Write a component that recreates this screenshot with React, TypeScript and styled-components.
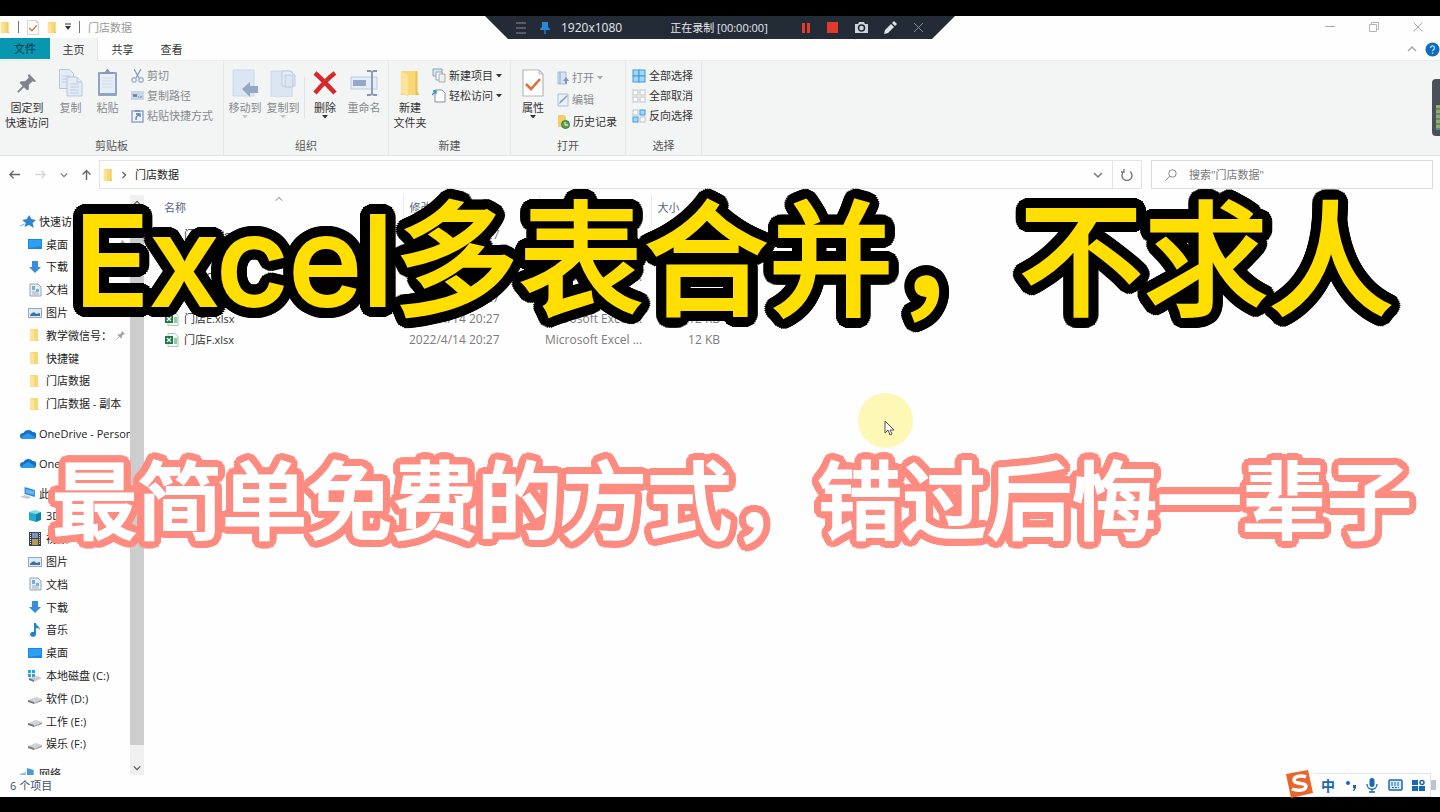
import React from "react";
import styled, { createGlobalStyle, css } from "styled-components";

const GlobalStyle = createGlobalStyle`
  * { box-sizing: border-box; }
  body {
    margin: 0;
    background: #000;
    font-family: "Open Sans", "Noto Sans CJK SC", sans-serif;
    font-size: 11px;
    line-height: 15px;
    color: #333;
  }
  button, input {
    font: inherit;
    color: inherit;
    border: 0;
    padding: 0;
    margin: 0;
    background: none;
  }
  ul { list-style: none; margin: 0; padding: 0; }
`;

const Screen = styled.div`
  position: relative;
  min-height: 100vh;
  padding: 16px 0 15px;
  display: flex;
  flex-direction: column;
  overflow: hidden;
`;

const Window = styled.main`
  position: relative;
  flex: 1;
  display: flex;
  flex-direction: column;
  background: #fefefe;
`;

/* ---------- title bar ---------- */

const TitleBar = styled.header`
  display: flex;
  align-items: center;
  height: 22px;
`;

const QuickTools = styled.div`
  display: flex;
  align-items: center;
  gap: 8px;
`;

const Rule = styled.span`
  width: 1px;
  height: 12px;
  background: #777;
`;

const WindowTitle = styled.h1`
  margin: 0 0 0 8px;
  font-size: 11px;
  font-weight: 400;
  color: #9a9a9a;
`;

const WindowControls = styled.div`
  display: flex;
  gap: 34px;
  margin-left: auto;
  padding-right: 17px;
`;

const IconButton = styled.button`
  display: inline-flex;
  align-items: center;
  justify-content: center;
`;

/* ---------- recorder bar ---------- */

const Recorder = styled.div`
  position: absolute;
  top: 0;
  left: calc(50% - 235px);
  width: 470px;
  height: 23px;
  padding: 0 31px 0 30px;
  display: flex;
  align-items: center;
  background: #232b36;
  color: #e6e9ec;
  clip-path: polygon(0 0, 100% 0, 447px 100%, 23px 100%);
`;

const RecorderLead = styled.div`
  display: flex;
  align-items: center;
  gap: 12px;
`;

const RecorderText = styled.span<{ $size: number; $gap: number }>`
  font-size: ${(p) => p.$size}px;
  margin-left: ${(p) => p.$gap}px;
  white-space: nowrap;
`;

const RecorderTools = styled.div`
  display: flex;
  align-items: center;
  justify-content: space-between;
  width: 123px;
  margin-left: auto;
`;

/* ---------- tabs ---------- */

const Tabs = styled.nav`
  display: flex;
  height: 23px;
  align-items: stretch;
  border-bottom: 1px solid #eceeee;
`;

const Tab = styled.button<{ $kind?: "file" | "active" }>`
  width: 49px;
  ${(p) =>
    p.$kind === "file" &&
    css`
      width: 50px;
      height: 21px;
      background: #0797b0;
      color: #12323a;
    `}
  ${(p) =>
    p.$kind === "active" &&
    css`
      width: 48px;
      margin-bottom: -1px;
      background: #f3f5f5;
      border-right: 1px solid #e4e6e6;
    `}
`;

const TabTools = styled.div`
  display: flex;
  align-items: center;
  gap: 8px;
  margin-left: auto;
`;

/* ---------- ribbon ---------- */

const Ribbon = styled.section`
  display: flex;
  height: 95px;
  background: #f3f5f5;
  border-bottom: 1px solid #e3e5e5;
`;

const Group = styled.div<{ $width: number }>`
  display: flex;
  flex-direction: column;
  justify-content: space-between;
  width: ${(p) => p.$width}px;
  padding-top: 5px;
  border-right: 1px solid #e6e8e8;
`;

const GroupItems = styled.div<{ $inset?: number }>`
  display: flex;
  padding-left: ${(p) => p.$inset ?? 0}px;
`;

const GroupLabel = styled.span`
  text-align: center;
  line-height: 18px;
  color: #555;
`;

const BigButton = styled.button<{ $width: number; $muted?: boolean }>`
  display: flex;
  flex-direction: column;
  align-items: center;
  width: ${(p) => p.$width}px;
  white-space: nowrap;
  color: ${(p) => (p.$muted ? "#85898d" : "#333")};
  svg { flex: none; }
`;

const IconSlot = styled.span`
  display: flex;
  align-items: center;
  height: 34px;
`;

const SmallList = styled.div<{ $roomy?: boolean; $inset?: number }>`
  display: flex;
  flex-direction: column;
  gap: ${(p) => (p.$roomy ? 7 : 5)}px;
  padding-top: ${(p) => (p.$roomy ? 4 : 2)}px;
  margin-left: ${(p) => p.$inset ?? 0}px;
`;

const SmallButton = styled.button<{ $muted?: boolean }>`
  display: flex;
  align-items: center;
  gap: 3px;
  height: 15px;
  white-space: nowrap;
  color: ${(p) => (p.$muted ? "#85898d" : "#333")};
`;

const Divider = styled.span`
  width: 1px;
  height: 41px;
  margin: 11px 1px 0 2px;
  background: #dfe1e2;
`;

/* ---------- address row ---------- */

const AddressRow = styled.div`
  display: flex;
  align-items: center;
  height: 37px;
  padding: 0 7px 0 8px;
`;

const NavButtons = styled.div`
  display: flex;
  align-items: center;
  justify-content: space-between;
  width: 84px;
  margin-right: 7px;
`;

const AddressBox = styled.div`
  flex: 1;
  display: flex;
  align-items: center;
  gap: 7px;
  height: 29px;
  padding: 0 9px 0 3px;
  border: 1px solid #e4e4e4;
  color: #222;
  & > :last-child { margin-left: auto; }
`;

const RefreshBox = styled.button`
  width: 29px;
  height: 29px;
  display: flex;
  align-items: center;
  justify-content: center;
  border: 1px solid #e4e4e4;
  border-left: 0;
`;

const SearchBox = styled.label`
  display: flex;
  align-items: center;
  gap: 12px;
  width: 282px;
  height: 29px;
  margin-left: 9px;
  padding-left: 13px;
  border: 1px solid #dcdcdc;
  input { flex: 1; min-width: 0; outline: 0; }
  input::placeholder { color: #777; opacity: 1; }
`;

/* ---------- body ---------- */

const Body = styled.div`
  flex: 1;
  display: flex;
  min-height: 0;
  padding-top: 2px;
`;

const Sidebar = styled.aside`
  display: flex;
  width: 144px;
  overflow: hidden;
`;

const Tree = styled.ul`
  flex: 1;
  min-width: 0;
  display: flex;
  flex-direction: column;
  padding-top: 15px;
  margin-bottom: -10px;
`;

const TreeItem = styled.li<{ $root?: boolean; $gap?: boolean }>`
  flex: 1 0 0;
  min-height: 22px;
  display: flex;
  align-items: center;
  gap: ${(p) => (p.$root ? 3 : 4)}px;
  margin-top: ${(p) => (p.$gap ? 7 : 0)}px;
  padding-left: ${(p) => (p.$root ? 20 : 28)}px;
  white-space: nowrap;
  overflow: hidden;
  color: #222;
  svg { flex: none; }
`;

const TreePin = styled.span`
  display: flex;
  margin-left: auto;
  padding-right: 4px;
`;

const ScrollTrack = styled.div`
  width: 14px;
  display: flex;
  flex-direction: column;
  align-items: center;
  background: #f0f0f0;
`;

const ScrollArrow = styled.button`
  height: 15px;
  display: flex;
  align-items: center;
`;

const ScrollThumb = styled.div`
  flex: 1;
  align-self: stretch;
  margin-bottom: 15px;
  background: #cdcdcd;
`;

const Files = styled.section`
  flex: 1;
  padding-left: 14px;
`;

const FileTable = styled.table`
  table-layout: fixed;
  width: 568px;
  border-collapse: collapse;
  line-height: 20px;
`;

const HeadCell = styled.th<{ $width: number }>`
  position: relative;
  width: ${(p) => p.$width}px;
  height: 29px;
  padding: 0 0 3px 6px;
  border-right: 1px solid #ebebeb;
  font-weight: 400;
  text-align: left;
  color: #56657c;
`;

const SortMark = styled.span`
  position: absolute;
  top: 0;
  left: 48%;
  display: flex;
`;

const Cell = styled.td<{ $right?: boolean; $name?: boolean }>`
  height: 21px;
  padding: 0 6px;
  font-size: ${(p) => (p.$name ? 11 : 12)}px;
  text-align: ${(p) => (p.$right ? "right" : "left")};
  color: ${(p) => (p.$name ? "#333" : "#7b7b7b")};
  white-space: nowrap;
`;

const FileName = styled.span`
  display: flex;
  align-items: center;
  gap: 5px;
`;

const StatusBar = styled.footer`
  height: 22px;
  padding: 3px 10px;
  color: #3c4f66;
`;

/* ---------- things floating over the desktop ---------- */

const Gadget = styled.div`
  position: absolute;
  top: 63px;
  right: 0;
  width: 8px;
  height: 57px;
  padding: 26px 0 6px 4px;
  border-radius: 4px 0 0 4px;
  background: #4b4f5a;
  &::after {
    content: "";
    display: block;
    height: 100%;
    background: repeating-linear-gradient(#9aa86a 0 3px, #5d8a72 3px 5px);
  }
`;

const ImeBar = styled.div`
  position: absolute;
  right: 4px;
  bottom: 0;
  height: 27px;
  display: flex;
  align-items: center;
  color: #1868b8;
`;

const ImeKeys = styled.div`
  display: flex;
  align-items: center;
  justify-content: space-between;
  width: 117px;
  height: 24px;
  padding: 0 5px 0 7px;
  margin-top: 3px;
  border: 1px solid #dfe5f0;
  border-left: 0;
  font-size: 14px;
  font-weight: 700;
`;

const ImeGrip = styled.span`
  width: 5px;
  height: 10px;
  margin-top: 3px;
  background: #b9c4d4;
`;

const PointerHalo = styled.div`
  position: absolute;
  top: 393px;
  left: 858px;
  width: 55px;
  height: 55px;
  border-radius: 50%;
  background: #fdf8b5;
  padding: 27px 0 0 26px;
`;

/* A round-cornered outline: copies of the text set in rings around it. */
const outline = (radius: number, color: string) =>
  [radius, radius / 2]
    .flatMap((r) =>
      Array.from({ length: 32 }, (_, i) => {
        const a = (i * Math.PI) / 16;
        return `${(Math.cos(a) * r).toFixed(2)}px ${(Math.sin(a) * r).toFixed(2)}px 0 ${color}`;
      }),
    )
    .join(", ");

const Caption = styled.p<{ $main?: boolean }>`
  position: absolute;
  margin: 0;
  white-space: nowrap;
  font-family: Inter, "Noto Sans CJK SC", sans-serif;
  font-weight: 500;
  ${(p) =>
    p.$main
      ? css`
          top: 186px;
          left: 74px;
          font-size: 125px;
          line-height: 150px;
          color: #ffde00;
          -webkit-text-stroke: 2px #ffde00;
          text-shadow: ${outline(11, "#000")};
        `
      : css`
          top: 453px;
          left: 52px;
          font-size: 85px;
          line-height: 100px;
          color: #fff;
          -webkit-text-stroke: 2px #fff;
          text-shadow: ${outline(8, "#fd8b80")};
        `}
`;

/* ---------- icons ---------- */

const Folder = ({ w = 12, h = 14 }: { w?: number; h?: number }) => (
  <svg width={w} height={h} viewBox="0 0 12 14" preserveAspectRatio="none" aria-hidden>
    <path d="M1 1h9v10l1 2H1z" fill="#f8d775" />
    <path d="M1 1l4 2v11l-4-2z" fill="#fbe39a" />
    <path d="M10 1v10l1 2H9V1z" fill="#edc04f" />
  </svg>
);

const CheckDoc = ({ w, h }: { w: number; h: number }) => (
  <svg width={w} height={h} viewBox="0 0 22 28" aria-hidden>
    <path d="M1 1h16l4 4v22H1z" fill="#fff" stroke="#b5b8bb" strokeWidth="1.2" />
    <path d="M17 1v4h4" fill="none" stroke="#b5b8bb" />
    <path d="M4 15l5 5 9-10" fill="none" stroke="#dd7137" strokeWidth="2.6" />
  </svg>
);

const Caret = ({ color = "#333" }: { color?: string }) => (
  <svg width="6" height="4" viewBox="0 0 6 4" aria-hidden>
    <path d="M0 0h6L3 3.500z" fill={color} />
  </svg>
);

const QuickCaret = () => (
  <svg width="6" height="8" viewBox="0 0 6 8" aria-hidden>
    <path d="M0 1h6" stroke="#333" />
    <path d="M0 3h6L3 7z" fill="#333" />
  </svg>
);

const Chevron = ({ dir = "down", size = 9, color = "#555" }: { dir?: "down" | "up" | "right"; size?: number; color?: string }) => (
  <svg width={size} height={size} viewBox="0 0 10 10" aria-hidden>
    <path
      d={dir === "down" ? "M1 3l4 4 4-4" : dir === "up" ? "M1 7l4-4 4 4" : "M3 1l4 4-4 4"}
      fill="none"
      stroke={color}
      strokeWidth="1.500"
    />
  </svg>
);

const NavArrow = ({ dir, color = "#666" }: { dir: "left" | "right" | "up"; color?: string }) => (
  <svg width={dir === "up" ? 11 : 13} height="13" viewBox="0 0 14 14" aria-hidden>
    <path
      d={
        dir === "left"
          ? "M13 7H2M6 3L2 7l4 4"
          : dir === "right"
            ? "M1 7h11M8 3l4 4-4 4"
            : "M7 14V2M2 7l5-5 5 5"
      }
      fill="none"
      stroke={color}
      strokeWidth={dir === "up" ? 1.8 : 1.4}
    />
  </svg>
);

const Pushpin = ({ size, color }: { size: number; color: string }) => (
  <svg width={size} height={size} viewBox="0 0 24 24" aria-hidden>
    <path d="M14 2l8 8-2 1-2-1-4 4v5l-2 1-8-8 1-2h5l4-4-1-2z" fill={color} />
    <path d="M9 15l-7 7" stroke={color} strokeWidth="2" />
  </svg>
);

const CopyIcon = () => (
  <svg width="24" height="28" viewBox="0 0 24 28" aria-hidden>
    <g fill="#e3ebf5" stroke="#b5c6dc">
      <path d="M.5.5h10l4 4v15H.5z" />
      <path d="M8 8h10l5 5v14H8z" />
      <path d="M18 8v5h5" />
    </g>
    <path d="M3 7h8M3 10h5M3 13h5M11 15h9M11 18h9M11 21h9M11 24h9" stroke="#bccde2" />
  </svg>
);

const PasteIcon = () => (
  <svg width="21" height="28" viewBox="0 0 21 28" aria-hidden>
    <rect x="1" y="3" width="19" height="24" rx="1" fill="#8fa5c6" />
    <rect x="3" y="5" width="15" height="19" fill="#e6edf6" />
    <path d="M5 5V3h3l2-3h1l2 3h3v2z" fill="#8798af" />
    <path d="M5 9h11M5 12h11M5 15h11M5 18h11" stroke="#d1dceb" />
  </svg>
);

const CutIcon = () => (
  <svg width="13" height="14" viewBox="0 0 13 14" aria-hidden>
    <path d="M3 0l5 9M10 0L5 9" stroke="#8d9bb0" strokeWidth="1.300" />
    <circle cx="3" cy="11" r="2.200" fill="none" stroke="#9fb4d2" strokeWidth="1.400" />
    <circle cx="10" cy="11" r="2.200" fill="none" stroke="#9fb4d2" strokeWidth="1.400" />
  </svg>
);

const PathIcon = () => (
  <svg width="13" height="10" viewBox="0 0 13 10" aria-hidden>
    <rect width="13" height="9" fill="#c8d6e9" />
    <path d="M2 3l1 3 1-3 1 3 1-3M7 6h1M9 6h2" fill="none" stroke="#6a7d99" />
  </svg>
);

const ShortcutIcon = () => (
  <svg width="13" height="14" viewBox="0 0 13 14" aria-hidden>
    <rect x="1" y="2" width="11" height="11" fill="#f0f5fb" stroke="#8ca6cb" strokeWidth="1.500" />
    <path d="M4 1h5v2H4z" fill="#8798af" />
    <path d="M5 11c0-3 0-4 3-5M5 5h4v3" fill="none" stroke="#4e75b0" strokeWidth="1.300" />
  </svg>
);

const MoveToIcon = () => (
  <svg width="26" height="28" viewBox="0 0 26 28" aria-hidden>
    <path d="M1 1h21v26H1z" fill="#dce6f3" stroke="#cad8ea" />
    <path d="M10 20l8-7v4h8v7h-8v4z" fill="#94a7c4" />
  </svg>
);

const CopyToIcon = () => (
  <svg width="26" height="28" viewBox="0 0 26 28" aria-hidden>
    <path d="M1 2h21v26H1z" fill="#dce6f3" stroke="#cad8ea" />
    <path d="M12 2h8l5 4v11H12z" fill="#e5edf7" stroke="#bccbe0" />
    <path d="M15 6h8v12h-8z" fill="#dae4f2" stroke="#bccbe0" />
  </svg>
);

const DeleteIcon = () => (
  <svg width="24" height="28" viewBox="0 0 24 28" aria-hidden>
    <path d="M2 4c7 6 13 13 20 20M22 4C15 9 8 17 2 24" fill="none" stroke="#d8282a" strokeWidth="4.500" />
  </svg>
);

const RenameIcon = () => (
  <svg width="28" height="28" viewBox="0 0 28 28" aria-hidden>
    <rect x="1" y="8" width="26" height="12" fill="#e6edf6" stroke="#b9cbe2" />
    <rect x="3" y="11" width="13" height="6" fill="#94a9c9" />
    <path d="M17 2h3l2 1 2-1h3M17 26h3l2-1 2 1h3M22 3v22" fill="none" stroke="#8497b3" strokeWidth="1.800" />
  </svg>
);

const NewItemIcon = () => (
  <svg width="14" height="15" viewBox="0 0 14 15" aria-hidden>
    <path d="M1 1h9v7H1z" fill="#dbe9f5" stroke="#7f9fbc" />
    <path d="M4 4h6v8H4z" fill="#fff" stroke="#8ea4b8" />
    <path d="M7 6h6v8H7z" fill="#eee" stroke="#aaa" />
  </svg>
);

const EasyAccessIcon = () => (
  <svg width="14" height="14" viewBox="0 0 14 14" aria-hidden>
    <path d="M3 1h7l3 3v9H3z" fill="#fff" stroke="#888f96" />
    <path d="M0 6l4-4M1 2h3v3" fill="none" stroke="#3d8bc5" strokeWidth="1.300" />
  </svg>
);

const OpenIcon = () => (
  <svg width="12" height="14" viewBox="0 0 12 14" aria-hidden>
    <path d="M1 1h8v12H1z" fill="#d7e3f2" stroke="#a6bcd8" />
    <path d="M3 1v12" stroke="#88a3c8" />
    <path d="M9 6l3 4h-2v3H8v-3H6z" fill="#7d97bd" />
  </svg>
);

const EditIcon = () => (
  <svg width="12" height="14" viewBox="0 0 12 14" aria-hidden>
    <path d="M1 1h10v12H1z" fill="#ebf1f9" stroke="#a9bfdd" />
    <path d="M2 11l1-3 7-6 1 1-7 7z" fill="#8ca8d0" />
  </svg>
);

const HistoryIcon = () => (
  <svg width="13" height="14" viewBox="0 0 13 14" aria-hidden>
    <path d="M1 0h6l2 2v10H1z" fill="#f3cf63" />
    <circle cx="8.500" cy="9.500" r="4" fill="#5aa04f" stroke="#3d7c3c" />
    <path d="M8 7v3h3" fill="none" stroke="#fff" />
  </svg>
);

const SelectIcon = ({ mode }: { mode: "all" | "none" | "invert" }) => {
  const on = { fill: "#a5d6f7", stroke: "#3f9bdc" };
  const off = { fill: "#fafafa", stroke: "#bfc2c4" };
  const cell = (i: number) => (mode === "all" ? on : mode === "none" ? off : i === 1 || i === 2 ? on : off);
  const size = mode === "all" ? 6 : 5;
  const far = mode === "all" ? 7 : 8;
  const spots = [[1, 1], [far, 1], [1, far], [far, far]];
  return (
    <svg width="14" height="14" viewBox="0 0 14 14" aria-hidden>
      {spots.map(([x, y], i) => (
        <rect key={i} x={x} y={y} width={size} height={size} {...cell(i)} />
      ))}
    </svg>
  );
};

type GlyphName =
  | "star" | "desktop" | "download" | "doc" | "picture" | "folder" | "cloud"
  | "pc" | "cube" | "video" | "music" | "system" | "drive" | "network";

const glyphs: Record<GlyphName, React.ReactNode> = {
  star: (
    <>
      <path d="M8 1l2 4 4 1-3 3 1 5-4-3-4 2 1-4-3-3 4-1z" fill="#2c83cf" />
      <path d="M0 12l4-2" stroke="#7db6e4" />
    </>
  ),
  desktop: (
    <>
      <rect y="2" width="14" height="10" fill="#1789e2" />
      <path d="M1 3h12v6L1 11z" fill="#2da0f3" />
    </>
  ),
  download: <path d="M4 1h6v6h3l-6 6-6-6h3z" fill="#3a8ddb" />,
  doc: (
    <>
      <path d="M2 1h8l3 3v9H2z" fill="#e9eff4" stroke="#98a5b0" />
      <path d="M4 3h3v4H4zM8 6h3v3H8z" fill="#6fb1dd" />
      <path d="M4 9h6M4 11h7" stroke="#9db2c2" />
    </>
  ),
  picture: (
    <>
      <rect x="0.500" y="2.500" width="13" height="9" fill="#dcecf7" stroke="#9aa8b4" />
      <path d="M2 9c3-4 5-3 6-1l4-1v3H2z" fill="#3d6fa1" />
    </>
  ),
  folder: (
    <>
      <path d="M2 1h8v10l1 2H2z" fill="#f8d775" />
      <path d="M2 1l4 2v10l-4-1z" fill="#fbe39a" />
    </>
  ),
  cloud: (
    <>
      <path d="M3 12a3 3 0 0 1 0-6 4.500 4.500 0 0 1 8-1 3.500 3.500 0 0 1 0 7z" fill="#1470c4" />
      <path d="M1 10l6-4 6 4-1 2H3z" fill="#2a9be8" />
    </>
  ),
  pc: (
    <>
      <path d="M4 1l9 3v7L4 8z" fill="#2f87d4" />
      <path d="M5 3l7 2v4L5 7z" fill="#67b8f1" />
      <path d="M0 11l4-2 6 2-3 2z" fill="#c4cbd2" />
    </>
  ),
  cube: (
    <>
      <path d="M1 3l6-2 6 2-5 2z" fill="#7fdcf0" />
      <path d="M1 3l7 2v8l-7-2z" fill="#24a9cf" />
      <path d="M13 3L8 5v8l5-2z" fill="#0f7fae" />
    </>
  ),
  video: (
    <>
      <rect x="1" width="12" height="14" fill="#3c4350" />
      <path d="M4 1h6v5H4z" fill="#7f92c5" />
      <path d="M4 7h6v6H4z" fill="#b59a52" />
      <path d="M2.500 1v12M11.500 1v12" stroke="#d5d8dd" strokeDasharray="1 1" />
    </>
  ),
  music: <path d="M6 0h2c0 3 4 3 4 7-1-2-3-2-4-2v6a3 2.500 0 1 1-2-2z" fill="#1e86d0" />,
  system: (
    <>
      <path d="M0 1h3v3H0zM4 1h3v3H4zM0 5h3v3H0zM4 5h3v3H4z" fill="#20a3e0" />
      <path d="M1 9l8-2 5 2-8 4z" fill="#c9cdd0" />
      <path d="M1 9l5 2v2l-5-2z" fill="#73797e" />
    </>
  ),
  drive: (
    <>
      <path d="M0 9l8-3 6 2-8 4z" fill="#cfd2d4" />
      <path d="M0 9l6 2v2l-6-2z" fill="#73797e" />
      <path d="M14 8l-8 4v1l8-3z" fill="#9ea3a7" />
    </>
  ),
  network: (
    <>
      <path d="M6 1l6 2v9L6 9z" fill="#4b9bda" />
      <path d="M0 7l5-2v5l-4 3z" fill="#8cbfe5" />
    </>
  ),
};

const Glyph = ({ name, wide }: { name: GlyphName; wide?: boolean }) => (
  <svg width={wide ? 16 : 14} height="14" viewBox="0 0 14 14" preserveAspectRatio="none" aria-hidden>
    {glyphs[name]}
  </svg>
);

const ExcelIcon = () => (
  <svg width="15" height="14" viewBox="0 0 15 14" aria-hidden>
    <path d="M4 0.500h7l3 3v10H4z" fill="#f2f8f4" stroke="#a9c8b5" />
    <rect x="1" y="3" width="8" height="8" fill="#1c7a46" />
    <path d="M3 5l4 4M7 5L3 9" stroke="#fff" strokeWidth="1.200" />
    <path d="M10 6h3M10 8h3M10 10h3" stroke="#3d9463" />
  </svg>
);

/* ---------- data ---------- */

const tree: { icon: GlyphName; label: string; root?: boolean; gap?: boolean; pin?: boolean }[] = [
  { icon: "star", label: "快速访问", root: true },
  { icon: "desktop", label: "桌面", pin: true },
  { icon: "download", label: "下载", pin: true },
  { icon: "doc", label: "文档", pin: true },
  { icon: "picture", label: "图片", pin: true },
  { icon: "folder", label: "教学微信号：", pin: true },
  { icon: "folder", label: "快捷键" },
  { icon: "folder", label: "门店数据" },
  { icon: "folder", label: "门店数据 - 副本" },
  { icon: "cloud", label: "OneDrive - Personal", root: true, gap: true },
  { icon: "cloud", label: "OneDrive", root: true, gap: true },
  { icon: "pc", label: "此电脑", root: true, gap: true },
  { icon: "cube", label: "3D 对象" },
  { icon: "video", label: "视频" },
  { icon: "picture", label: "图片" },
  { icon: "doc", label: "文档" },
  { icon: "download", label: "下载" },
  { icon: "music", label: "音乐" },
  { icon: "desktop", label: "桌面" },
  { icon: "system", label: "本地磁盘 (C:)" },
  { icon: "drive", label: "软件 (D:)" },
  { icon: "drive", label: "工作 (E:)" },
  { icon: "drive", label: "娱乐 (F:)" },
  { icon: "network", label: "网络", root: true, gap: true },
];

const files = ["A", "B", "C", "D", "E", "F"].map((letter) => `门店${letter}.xlsx`);

/* ---------- sections ---------- */

const RibbonArea = () => (
  <Ribbon>
    <Group $width={224}>
      <GroupItems $inset={2}>
        <BigButton $width={50}>
          <IconSlot><Pushpin size={22} color="#7f858c" /></IconSlot>
          <span>固定到</span>
          <span>快速访问</span>
        </BigButton>
        <BigButton $width={37} $muted><IconSlot><CopyIcon /></IconSlot>复制</BigButton>
        <BigButton $width={37} $muted><IconSlot><PasteIcon /></IconSlot>粘贴</BigButton>
        <SmallList $inset={5}>
          <SmallButton $muted><CutIcon />剪切</SmallButton>
          <SmallButton $muted><PathIcon />复制路径</SmallButton>
          <SmallButton $muted><ShortcutIcon />粘贴快捷方式</SmallButton>
        </SmallList>
      </GroupItems>
      <GroupLabel>剪贴板</GroupLabel>
    </Group>
    <Group $width={165}>
      <GroupItems $inset={2}>
        <BigButton $width={38} $muted><IconSlot><MoveToIcon /></IconSlot>移动到<Caret color="#c3c6c9" /></BigButton>
        <BigButton $width={38} $muted><IconSlot><CopyToIcon /></IconSlot>复制到<Caret color="#c3c6c9" /></BigButton>
        <Divider />
        <BigButton $width={38}><IconSlot><DeleteIcon /></IconSlot>删除<Caret /></BigButton>
        <BigButton $width={40} $muted><IconSlot><RenameIcon /></IconSlot>重命名</BigButton>
      </GroupItems>
      <GroupLabel>组织</GroupLabel>
    </Group>
    <Group $width={122}>
      <GroupItems $inset={2}>
        <BigButton $width={38}>
          <IconSlot><Folder w={22} h={28} /></IconSlot>
          <span>新建</span>
          <span>文件夹</span>
        </BigButton>
        <SmallList $inset={3}>
          <SmallButton><NewItemIcon />新建项目<Caret /></SmallButton>
          <SmallButton><EasyAccessIcon />轻松访问<Caret /></SmallButton>
        </SmallList>
      </GroupItems>
      <GroupLabel>新建</GroupLabel>
    </Group>
    <Group $width={115}>
      <GroupItems $inset={3}>
        <BigButton $width={38}><IconSlot><CheckDoc w={22} h={28} /></IconSlot>属性<Caret /></BigButton>
        <SmallList $roomy $inset={5}>
          <SmallButton $muted><OpenIcon />打开 <Caret color="#a5a8ab" /></SmallButton>
          <SmallButton $muted><EditIcon />编辑</SmallButton>
          <SmallButton><HistoryIcon />历史记录</SmallButton>
        </SmallList>
      </GroupItems>
      <GroupLabel>打开</GroupLabel>
    </Group>
    <Group $width={76}>
      <SmallList $inset={6}>
        <SmallButton><SelectIcon mode="all" />全部选择</SmallButton>
        <SmallButton><SelectIcon mode="none" />全部取消</SmallButton>
        <SmallButton><SelectIcon mode="invert" />反向选择</SmallButton>
      </SmallList>
      <GroupLabel>选择</GroupLabel>
    </Group>
  </Ribbon>
);

const RecorderBar = () => (
  <Recorder>
    <RecorderLead>
      <IconButton aria-label="菜单">
        <svg width="12" height="12" viewBox="0 0 12 12"><path d="M1 1h10M1 6h10M1 11h10" stroke="#8a9099" /></svg>
      </IconButton>
      <IconButton aria-label="置顶">
        <svg width="12" height="14" viewBox="0 0 12 14">
          <path d="M3 1h6v5l2 2v1H1V8l2-2z" fill="#2f86d6" />
          <path d="M6 9v4" stroke="#2f86d6" strokeWidth="1.300" />
        </svg>
      </IconButton>
    </RecorderLead>
    <RecorderText $size={12} $gap={10}>1920x1080</RecorderText>
    <RecorderText $size={11} $gap={48}>正在录制 [00:00:00]</RecorderText>
    <RecorderTools>
      <IconButton aria-label="暂停">
        <svg width="10" height="12" viewBox="0 0 10 12"><path d="M1 1h3v10H1zM6 1h3v10H6z" fill="#e23b2c" /></svg>
      </IconButton>
      <IconButton aria-label="停止">
        <svg width="11" height="11" viewBox="0 0 11 11"><path d="M0 0h11v11H0z" fill="#e23b2c" /></svg>
      </IconButton>
      <IconButton aria-label="截图">
        <svg width="15" height="13" viewBox="0 0 15 13">
          <path d="M1 3h3l1-2h5l1 2h3v9H1z" fill="#cfd4db" />
          <circle cx="7.500" cy="7" r="3" fill="#cfd4db" stroke="#232b36" strokeWidth="1.500" />
        </svg>
      </IconButton>
      <IconButton aria-label="画笔">
        <svg width="13" height="13" viewBox="0 0 13 13">
          <path d="M0 13l1-4 6-6 3 3-6 6zM8 2l2-2 3 3-2 2z" fill="#dfe3e8" />
        </svg>
      </IconButton>
      <IconButton aria-label="关闭录制">
        <svg width="11" height="11" viewBox="0 0 11 11"><path d="M1 1l9 9M10 1l-9 9" stroke="#858b94" /></svg>
      </IconButton>
    </RecorderTools>
  </Recorder>
);

export default function App() {
  return (
    <Screen>
      <GlobalStyle />
      <Window>
        <TitleBar>
          <QuickTools>
            <Folder w={10} h={13} />
            <Rule />
            <CheckDoc w={12} h={15} />
            <Folder w={10} h={13} />
            <QuickCaret />
            <Rule />
          </QuickTools>
          <WindowTitle>门店数据</WindowTitle>
          <WindowControls>
            <IconButton aria-label="最小化">
              <svg width="10" height="10" viewBox="0 0 10 10"><path d="M0 4.500h10" stroke="#aaa" /></svg>
            </IconButton>
            <IconButton aria-label="还原">
              <svg width="10" height="10" viewBox="0 0 10 10">
                <path d="M.5 2.500h7v7h-7zM2.500 2.500v-2h7v7h-2" fill="none" stroke="#b5b5b5" />
              </svg>
            </IconButton>
            <IconButton aria-label="关闭">
              <svg width="10" height="10" viewBox="0 0 10 10"><path d="M.5.5l9 9M9.500.5l-9 9" stroke="#aaa" /></svg>
            </IconButton>
          </WindowControls>
        </TitleBar>

        <Tabs>
          <Tab $kind="file">文件</Tab>
          <Tab $kind="active">主页</Tab>
          <Tab>共享</Tab>
          <Tab>查看</Tab>
          <TabTools>
            <IconButton aria-label="折叠功能区"><Chevron dir="up" size={10} color="#aaa" /></IconButton>
            <IconButton aria-label="帮助">
              <svg width="15" height="15" viewBox="0 0 15 15">
                <circle cx="7.500" cy="7.500" r="7" fill="#0f6cbd" />
                <path d="M5.500 6a2 2 0 1 1 3 1.600q-1 .6-1 1.600M7.500 10.500v1.500" fill="none" stroke="#a9dcff" strokeWidth="1.400" />
              </svg>
            </IconButton>
          </TabTools>
        </Tabs>

        <RibbonArea />

        <AddressRow>
          <NavButtons>
            <IconButton aria-label="后退"><NavArrow dir="left" /></IconButton>
            <IconButton aria-label="前进"><NavArrow dir="right" color="#d5d5d5" /></IconButton>
            <IconButton aria-label="最近位置"><Chevron size={8} color="#777" /></IconButton>
            <IconButton aria-label="上移"><NavArrow dir="up" /></IconButton>
          </NavButtons>
          <AddressBox>
            <Folder w={10} h={14} />
            <Chevron dir="right" size={8} />
            <span>门店数据</span>
            <IconButton aria-label="展开地址"><Chevron size={10} color="#777" /></IconButton>
          </AddressBox>
          <RefreshBox aria-label="刷新">
            <svg width="12" height="12" viewBox="0 0 12 12">
              <path d="M3 2.500a5 5 0 1 0 6 0M3 0v3H0" fill="none" stroke="#777" strokeWidth="1.400" />
            </svg>
          </RefreshBox>
          <SearchBox>
            <svg width="12" height="12" viewBox="0 0 12 12" aria-hidden>
              <circle cx="7.500" cy="4.500" r="3.700" fill="none" stroke="#888" />
              <path d="M5 7l-4.500 4.500" stroke="#888" />
            </svg>
            <input type="search" aria-label="搜索" placeholder={'搜索"门店数据"'} />
          </SearchBox>
        </AddressRow>

        <Body>
          <Sidebar>
            <Tree>
              {tree.map((item, i) => (
                <TreeItem key={i} $root={item.root} $gap={item.gap}>
                  <Glyph name={item.icon} wide={item.root} />
                  {item.label}
                  {item.pin && <TreePin><Pushpin size={10} color="#9ba0a6" /></TreePin>}
                </TreeItem>
              ))}
            </Tree>
            <ScrollTrack>
              <ScrollArrow aria-label="向上滚动"><Chevron dir="up" size={8} /></ScrollArrow>
              <ScrollThumb />
              <ScrollArrow aria-label="向下滚动"><Chevron size={8} /></ScrollArrow>
            </ScrollTrack>
          </Sidebar>
          <Files>
            <FileTable>
              <thead>
                <tr>
                  <HeadCell $width={245}>名称<SortMark><Chevron dir="up" size={8} color="#aaa" /></SortMark></HeadCell>
                  <HeadCell $width={136}>修改日期</HeadCell>
                  <HeadCell $width={112}>类型</HeadCell>
                  <HeadCell $width={75}>大小</HeadCell>
                </tr>
              </thead>
              <tbody>
                {files.map((name) => (
                  <tr key={name}>
                    <Cell $name><FileName><ExcelIcon />{name}</FileName></Cell>
                    <Cell>2022/4/14 20:27</Cell>
                    <Cell>Microsoft Excel ...</Cell>
                    <Cell $right>12 KB</Cell>
                  </tr>
                ))}
              </tbody>
            </FileTable>
          </Files>
        </Body>
        <StatusBar>6 个项目</StatusBar>

        <RecorderBar />
        <Gadget />
        <ImeBar>
          <svg width="29" height="29" viewBox="0 0 29 29" aria-hidden>
            <path d="M1 5l22-4 5 23-22 5z" fill="#e8652b" />
            <path d="M21 8c-4-2-12-1-12 3 0 5 12 2 12 6 0 5-9 5-14 3" fill="none" stroke="#fff" strokeWidth="3.500" />
          </svg>
          <ImeKeys>
            <span>中</span>
            <svg width="12" height="12" viewBox="0 0 12 12" aria-hidden>
              <circle cx="3" cy="4" r="2" fill="#1868b8" />
              <path d="M8 6h3v3l-2 3H8l1-3H8z" fill="#1868b8" />
            </svg>
            <svg width="12" height="15" viewBox="0 0 12 15" aria-hidden>
              <rect x="3.500" width="5" height="9" rx="2.500" fill="#1868b8" />
              <path d="M1 6c0 7 10 7 10 0M6 11v3M3 14h6" fill="none" stroke="#1868b8" strokeWidth="1.300" />
            </svg>
            <svg width="15" height="12" viewBox="0 0 15 12" aria-hidden>
              <rect x="1" y="1" width="13" height="10" rx="1" fill="#dcebf8" stroke="#1868b8" strokeWidth="1.500" />
              <path d="M3 4h9M3 6h9M4 8.500h7" stroke="#1868b8" strokeDasharray="2 1" />
            </svg>
            <svg width="13" height="13" viewBox="0 0 13 13" aria-hidden>
              <path d="M0 1h6v5H0zM0 7h6v5H0zM7 7h6v5H7z" fill="#1868b8" />
              <circle cx="10" cy="3.500" r="2" fill="none" stroke="#1868b8" strokeWidth="1.500" />
            </svg>
          </ImeKeys>
          <ImeGrip />
        </ImeBar>
      </Window>

      <PointerHalo>
        <svg width="11" height="16" viewBox="0 0 11 16" aria-hidden>
          <path d="M1 1v12l3-3 2 5 2-1-2-4h4z" fill="#fff" stroke="#555" />
        </svg>
      </PointerHalo>
      <Caption $main>Excel多表合并，不求人</Caption>
      <Caption>最简单免费的方式，错过后悔一辈子</Caption>
    </Screen>
  );
}
